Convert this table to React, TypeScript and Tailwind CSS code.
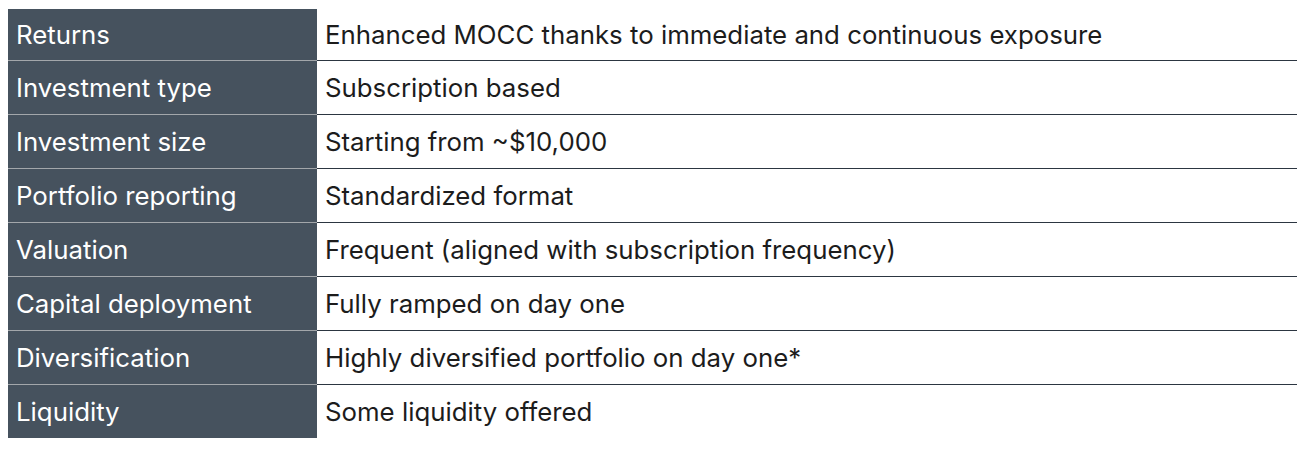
import React from "react";

const rows: [string, string][] = [
  ["Returns", "Enhanced MOCC thanks to immediate and continuous exposure"],
  ["Investment type", "Subscription based"],
  ["Investment size", "Starting from ~$10,000"],
  ["Portfolio reporting", "Standardized format"],
  ["Valuation", "Frequent (aligned with subscription frequency)"],
  ["Capital deployment", "Fully ramped on day one"],
  ["Diversification", "Highly diversified portfolio on day one*"],
  ["Liquidity", "Some liquidity offered"],
];

export default function App() {
  return (
    <div className="w-[1305px] h-[449px] bg-white pt-[9px] pl-[8px]" style={{ fontFamily: "Inter, 'Liberation Sans', sans-serif" }}>
      <div className="w-[1289px] flex flex-col">
        {rows.map(([k, v], i) => (
          <div key={k} className={`flex ${i === 0 ? "h-[51px]" : "h-[54px]"}`}>
            <div className={`w-[309px] bg-[#46525e] text-white text-[25.8px] pl-[8px] pt-[2px] flex items-center ${i === 0 ? "" : "border-t border-[#a3a7ab]"}`}>
              {k}
            </div>
            <div className={`flex-1 text-[#1c1c1c] text-[25.8px] pl-[8px] pt-[2px] flex items-center ${i === 0 ? "" : "border-t border-[#2c3641]"}`}>
              {v}
            </div>
          </div>
        ))}
      </div>
    </div>
  );
}
